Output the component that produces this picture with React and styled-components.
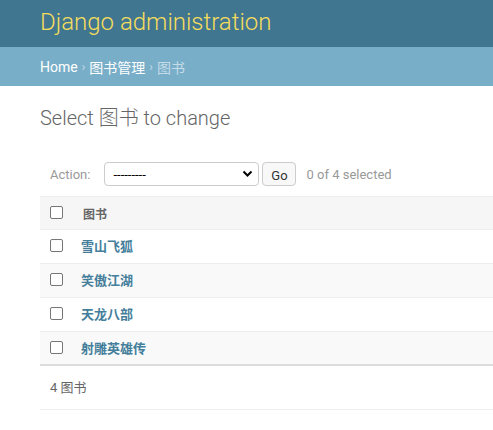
import React from "react";
import styled, { createGlobalStyle } from "styled-components";

const Global = createGlobalStyle`
  html, body { margin: 0; padding: 0; background: #fff; }
  body {
    font-family: Roboto, "Noto Sans CJK SC", "Lucida Grande", Verdana, Arial, sans-serif;
    font-size: 14px;
    color: #333;
    overflow: hidden;
  }
`;

const Header = styled.header`
  background: #417690;
  height: 47px;
  padding: 0 40px;
  display: flex;
  align-items: center;
`;

const Branding = styled.h1`
  margin: 0;
  font-size: 24px;
  font-weight: 300;
  color: #f5dd5d;
  line-height: 1;
  position: relative;
  top: -2px;
`;

const Breadcrumbs = styled.nav`
  background: #79aec8;
  height: 39px;
  padding: 0 40px;
  display: flex;
  align-items: center;
  font-size: 14px;
  color: #c4dce8;
  gap: 4px;
`;

const Crumb = styled.a`
  color: #fff;
  text-decoration: none;
`;

const Sep = styled.span`
  color: #c4dce8;
  font-size: 12px;
`;

const Content = styled.main`
  padding: 20px 0 20px 40px;
`;

const Title = styled.h1`
  margin: 0;
  height: 24px;
  line-height: 24px;
  font-size: 20px;
  font-weight: 300;
  color: #666;
`;

const Actions = styled.div`
  margin-top: 32px;
  padding: 0 10px;
  height: 24px;
  display: flex;
  align-items: center;
  font-size: 13px;
  color: #999;
`;

const ActionLabel = styled.label`
  margin-right: 14px;
`;

const Select = styled.div`
  box-sizing: border-box;
  width: 155px;
  height: 24px;
  border: 1px solid #ccc;
  border-radius: 4px;
  display: flex;
  align-items: center;
  justify-content: space-between;
  padding: 0 5px 0 8px;
  color: #000;
  font-size: 13px;
  background: #fff;
`;

const GoButton = styled.button`
  box-sizing: border-box;
  margin-left: 3px;
  width: 34px;
  height: 24px;
  border: 1px solid #ccc;
  border-radius: 4px;
  background: #f8f8f8;
  color: #333;
  font-family: inherit;
  font-size: 13px;
  padding: 0;
  padding-top: 2px;
`;

const Counter = styled.span`
  margin-left: 10px;
  color: #999;
`;

const Table = styled.div`
  margin-top: 10px;
`;

const Row = styled.div`
  display: flex;
  align-items: center;
  box-sizing: border-box;
  height: 34px;
  background: ${(p) => p.$bg};
  border-top: ${(p) => (p.$head ? "1px solid #eee" : "none")};
  border-bottom: ${(p) => (p.$last ? "2px solid #ddd" : "1px solid #eee")};
  padding-left: 10px;
`;

const Check = styled.span`
  box-sizing: border-box;
  width: 13px;
  height: 13px;
  border: 1px solid #767676;
  border-radius: 2px;
  background: #fff;
  margin-right: 18px;
  margin-top: -2px;
`;

const HeadLabel = styled.span`
  font-size: 12px;
  font-weight: 700;
  color: #666;
  margin-left: 2px;
`;

const ItemLink = styled.a`
  font-size: 13px;
  font-weight: 700;
  color: #447e9b;
  text-decoration: none;
  margin-top: -2px;
`;

const Paginator = styled.p`
  margin: 0;
  height: 43px;
  line-height: 44px;
  padding-left: 10px;
  font-size: 13px;
  color: #666;
  border-bottom: 1px solid #eee;
`;

const Chevron = () => (
  <svg width="11" height="8" viewBox="0 0 11 8">
    <path d="M1.5 1.5 L5.5 5.5 L9.5 1.5" fill="none" stroke="#000" strokeWidth="2" />
  </svg>
);

const books = ["雪山飞狐", "笑傲江湖", "天龙八部", "射雕英雄传"];

export default function App() {
  return (
    <>
      <Global />
      <Header>
        <Branding>Django administration</Branding>
      </Header>
      <Breadcrumbs>
        <Crumb href="#">Home</Crumb>
        <Sep>›</Sep>
        <Crumb href="#">图书管理</Crumb>
        <Sep>›</Sep>
        <span>图书</span>
      </Breadcrumbs>
      <Content>
        <Title>Select 图书 to change</Title>
        <Actions>
          <ActionLabel>Action:</ActionLabel>
          <Select>
            <span>---------</span>
            <Chevron />
          </Select>
          <GoButton>Go</GoButton>
          <Counter>0 of 4 selected</Counter>
        </Actions>
        <Table>
          <Row $head $bg="#f6f6f6">
            <Check />
            <HeadLabel>图书</HeadLabel>
          </Row>
          {books.map((b, i) => (
            <Row key={b} $bg={i % 2 ? "#f9f9f9" : "#fff"} $last={i === books.length - 1}>
              <Check />
              <ItemLink href="#">{b}</ItemLink>
            </Row>
          ))}
        </Table>
        <Paginator>4 图书</Paginator>
      </Content>
    </>
  );
}
